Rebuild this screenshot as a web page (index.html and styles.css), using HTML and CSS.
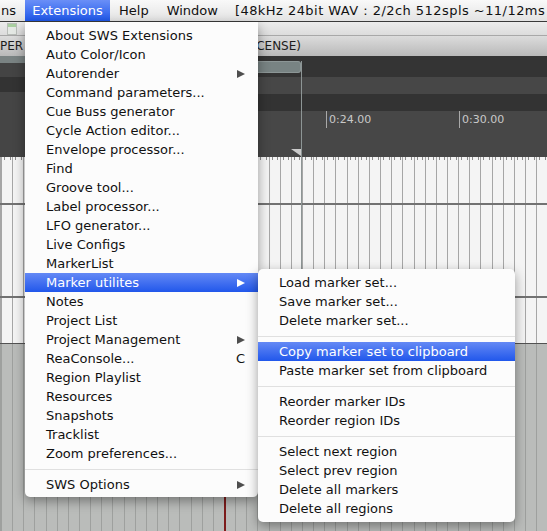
FILE: index.html
```html
<!DOCTYPE html>
<html>
<head>
<meta charset="utf-8">
<link rel="stylesheet" href="styles.css">
</head>
<body>
<div class="screen">
  <div class="menubar">
    <span class="mi first">ns</span>
    <span class="mi active">Extensions</span>
    <span class="mi">Help</span>
    <span class="mi">Window</span>
    <span class="status">[48kHz 24bit WAV : 2/2ch 512spls ~11/12ms RT]</span>
  </div>
  <div class="toolbar">
    <svg class="doc" width="12" height="12" viewBox="0 0 12 12"><rect x="1.5" y="0.5" width="9" height="11" fill="#e4e8e4" stroke="#b9bdb9"/><rect x="2" y="1" width="8" height="3" fill="#a9cfa0"/></svg>
  </div>
  <div class="titlebar">
    <div class="title-inner"><span class="title-main">PER v4.32/x64 - [Unsaved project]</span><span class="title-lic">(EVALUATION LICENSE)</span></div>
  </div>
  <div class="arrange-top">
    <div class="tcp">
      <div class="t1"></div>
      <div class="t2"></div>
      <div class="t3"></div>
      <div class="t4"></div>
    </div>
    <div class="ruler">
      <div class="r1"><div class="tab"></div></div>
      <div class="r2"></div>
      <div class="r3"></div>
      <div class="r4">
        <span class="tick">0:24.00</span>
        <span class="tick">0:30.00</span>
      </div>
    </div>
  </div>
  <div class="lane grid">
    <div class="chan"><div class="wave"></div></div>
    <div class="chan"><div class="wave"></div></div>
  </div>
  <div class="empty grid2">
    <div class="playline"></div>
  </div>

  <div class="cursor"></div>
  <div class="cursor-head"></div>

  <div class="menu main-menu">
    <div class="item">About SWS Extensions</div>
    <div class="item">Auto Color/Icon</div>
    <div class="item">Autorender<span class="arrow"></span></div>
    <div class="item">Command parameters...</div>
    <div class="item">Cue Buss generator</div>
    <div class="item">Cycle Action editor...</div>
    <div class="item">Envelope processor...</div>
    <div class="item">Find</div>
    <div class="item">Groove tool...</div>
    <div class="item">Label processor...</div>
    <div class="item">LFO generator...</div>
    <div class="item">Live Configs</div>
    <div class="item">MarkerList</div>
    <div class="item sel">Marker utilites<span class="arrow"></span></div>
    <div class="item">Notes</div>
    <div class="item">Project List</div>
    <div class="item">Project Management<span class="arrow"></span></div>
    <div class="item">ReaConsole...<span class="key">C</span></div>
    <div class="item">Region Playlist</div>
    <div class="item">Resources</div>
    <div class="item">Snapshots</div>
    <div class="item">Tracklist</div>
    <div class="item">Zoom preferences...</div>
    <div class="sep"></div>
    <div class="item">SWS Options<span class="arrow"></span></div>
  </div>

  <div class="menu sub-menu">
    <div class="item">Load marker set...</div>
    <div class="item">Save marker set...</div>
    <div class="item">Delete marker set...</div>
    <div class="sep"></div>
    <div class="item sel">Copy marker set to clipboard</div>
    <div class="item">Paste marker set from clipboard</div>
    <div class="sep"></div>
    <div class="item">Reorder marker IDs</div>
    <div class="item">Reorder region IDs</div>
    <div class="sep"></div>
    <div class="item">Select next region</div>
    <div class="item">Select prev region</div>
    <div class="item">Delete all markers</div>
    <div class="item">Delete all regions</div>
  </div>
</div>
</body>
</html>
```

FILE: styles.css
```css
* { box-sizing: border-box; }

body {
  margin: 0;
  width: 547px;
  height: 531px;
  overflow: hidden;
  font-family: "DejaVu Sans", "Liberation Sans", sans-serif;
}

.screen {
  position: relative;
  width: 547px;
  height: 531px;
  overflow: hidden;
  display: flex;
  flex-direction: column;
  background: #babcba;
}

/* ---------- menu bar ---------- */
.menubar {
  flex: 0 0 22px;
  display: flex;
  align-items: stretch;
  background: linear-gradient(#f9f9f9, #e3e3e3);
  border-bottom: 1px solid #3a3a3a;
  font-size: 13px;
  color: #111;
  white-space: nowrap;
  line-height: 21px;
  overflow: hidden;
}
.mi { flex-shrink: 0; padding: 0 9px; }
.mi.first { width: 25px; padding: 0 0 0 1px; }
.mi.active {
  width: 85px;
  padding: 0;
  text-align: center;
  color: #fff;
  background: linear-gradient(#6a8ff7, #1f58ea);
}
.status {
  flex-shrink: 0;
  padding-left: 8px;
  letter-spacing: 0.45px;
}

/* ---------- toolbar & title ---------- */
.toolbar {
  flex: 0 0 14px;
  background: linear-gradient(#ececec, #dcdcdc);
  border-bottom: 1px solid #a8a8a8;
  padding: 1px 0 0 6px;
  overflow: hidden;
}
.doc { display: block; }

.titlebar {
  flex: 0 0 20px;
  background: linear-gradient(#dcdcdc, #b9b9b9);
  font-size: 12px;
  line-height: 20px;
  color: #1c1c1c;
}
.title-inner {
  width: 301px;
  display: flex;
  overflow: hidden;
  white-space: nowrap;
}
.title-main {
  flex: 1 1 auto;
  min-width: 0;
  overflow: hidden;
}
.title-lic { flex-shrink: 0; }

/* ---------- arrange top (rows + ruler) ---------- */
.arrange-top {
  flex: 0 0 101px;
  display: flex;
}
.tcp {
  flex: 0 0 25px;
  display: flex;
  flex-direction: column;
}
.t1 { height: 7px; background: #7a8383; }
.t2 { height: 14px; background: #444; }
.t3 { height: 15px; background: #333; }
.t4 { flex: 1; background: #454545; }

.ruler {
  flex: 1 1 auto;
  min-width: 0;
  overflow: hidden;
  display: flex;
  flex-direction: column;
}
.r1 { height: 21px; background: #343434; padding-top: 5px; }
.tab {
  width: 276px;
  height: 12px;
  background: #788383;
  border: 1px solid #8c9696;
  border-left: 0;
  border-radius: 0 3px 3px 0;
}
.r2 { height: 17px; background: #474747; }
.r3 { height: 17px; background: #333; }
.r4 {
  flex: 1;
  background: #474747;
  display: flex;
  align-items: flex-start;
  padding-left: 301px;
}
.tick {
  flex: 0 0 133px;
  height: 17px;
  border-left: 1px solid #a9a9a9;
  padding-left: 2px;
  font-size: 11px;
  line-height: 17px;
  color: #c9c9c9;
  white-space: nowrap;
}

/* ---------- track lane ---------- */
.grid {
  background-color: #f4f4f4;
  background-image:
    repeating-linear-gradient(90deg, #8a8a8a 0, #8a8a8a 1px, transparent 1px, transparent 5.575px),
    repeating-linear-gradient(90deg, #a6a6a6 0, #a6a6a6 1px, transparent 1px, transparent 11.15px);
  background-size: 100% 3px, 100% 100%;
  background-repeat: no-repeat, repeat;
  background-position: 4px 0, 1px 0;
}
.grid2 {
  background-color: #babcba;
  background-image: repeating-linear-gradient(90deg, #9ea09e 0, #9ea09e 1px, transparent 1px, transparent 11.15px);
  background-position: 1px 0;
}
.lane {
  flex: 0 0 187px;
  border-bottom: 1px solid #525252;
  display: flex;
  flex-direction: column;
}
.chan {
  flex: 1;
  display: flex;
  align-items: center;
}
.wave {
  width: 100%;
  height: 2px;
  background: #727272;
}
.empty {
  flex: 1;
  position: relative;
}
.playline {
  position: absolute;
  left: 224px;
  top: 0;
  bottom: 0;
  width: 1.5px;
  background: #7d1c1c;
}

/* edit cursor overlay */
.cursor {
  position: absolute;
  left: 301px;
  top: 61px;
  width: 1px;
  height: 282px;
  background: #8d9595;
}
.cursor-head {
  position: absolute;
  left: 291px;
  top: 149px;
  width: 0;
  height: 0;
  border-top: 7px solid #cbcbcb;
  border-left: 10px solid transparent;
}

/* ---------- menus ---------- */
.menu {
  position: absolute;
  z-index: 10;
  background: #fcfcfc;
  box-shadow: 0 4px 12px rgba(0, 0, 0, 0.38);
  font-size: 13px;
  color: #111;
}
.main-menu {
  left: 25px;
  top: 22px;
  width: 233px;
  padding: 4px 0 3px;
  border-radius: 0 0 5px 5px;
}
.sub-menu {
  z-index: 11;
  left: 258px;
  top: 269px;
  width: 257px;
  padding: 4px 0;
  border-radius: 5px;
}
.item {
  height: 19px;
  line-height: 19px;
  padding: 0 13px 0 21px;
  display: flex;
  justify-content: space-between;
  align-items: center;
  white-space: nowrap;
}
.item.sel {
  color: #fff;
  background: linear-gradient(#6489f5, #2157eb);
}
.arrow {
  width: 0;
  height: 0;
  border-left: 8px solid #4e4e4e;
  border-top: 4.5px solid transparent;
  border-bottom: 4.5px solid transparent;
}
.sel .arrow { border-left-color: #fff; }
.key { color: #111; }
.sep {
  height: 1px;
  margin: 6px 0 5px;
  background: #e0e0e0;
}
```
